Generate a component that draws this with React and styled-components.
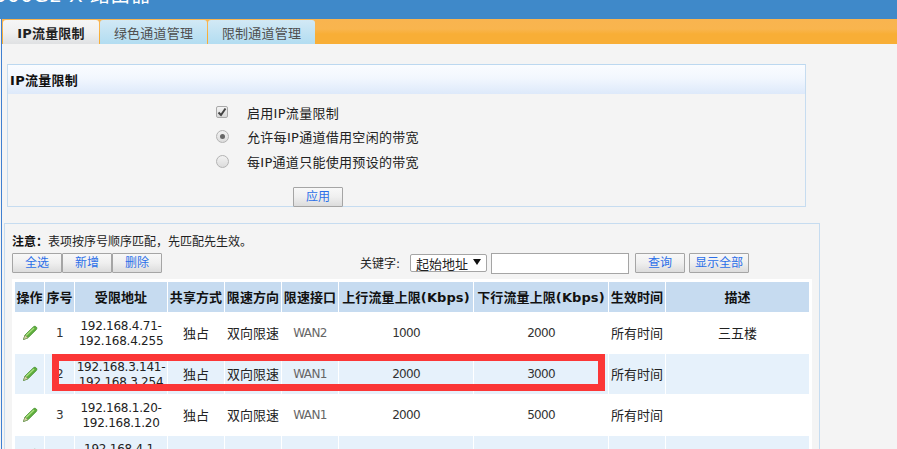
import React from "react";
import styled, { createGlobalStyle } from "styled-components";

const Global = createGlobalStyle`
  html, body { margin: 0; padding: 0; background: #f4f4f4; }
  body { font-family: "DejaVu Sans", "Noto Sans CJK SC", sans-serif; font-size: 12px; color: #111; }
`;
const Page = styled.div`
  width: 897px; height: 449px; overflow: hidden; position: relative;
  display: flex; flex-direction: column; background: #f4f4f4;
`;
const Header = styled.header`
  height: 19px; flex: none; background: #3f89c9; overflow: hidden; color: #fff;
  font-size: 20px; line-height: 24px; white-space: nowrap;
`;
const HeaderTitle = styled.div`
  margin: -17px 0 0 -6px; letter-spacing: 0.4px;
`;
const Main = styled.div`
  flex: 1; min-height: 0; border-left: 1px solid #3f7fd0; margin-left: 1px;
  display: flex; flex-direction: column;
`;
const TabBar = styled.nav`
  flex: none; height: 25px; display: flex; align-items: flex-end; gap: 1px; padding-left: 1px;
  background: linear-gradient(180deg, #f9b44f 0%, #f9b54e 40%, #f8ae36 60%, #f8ae36 100%);
`;
const Tab = styled.div`
  height: 24px; width: ${p => p.$w}px; display: flex; align-items: center; justify-content: center;
  font-size: 13px; border-radius: 3px 3px 0 0; letter-spacing: 0.2px;
  color: ${p => (p.$active ? "#222" : "#4f4f4f")};
  font-weight: ${p => (p.$active ? 700 : 400)};
  background: ${p => p.$active
    ? "linear-gradient(180deg, #f6f6f6 0%, #f0f0f0 50%, #dfe1e3 100%)"
    : "linear-gradient(180deg, #d2e9f5 0%, #b2ddf1 100%)"};
`;
const Panel = styled.section`
  margin: 20px 0 0 5px; width: 799px; height: 143px; flex: none; box-sizing: border-box;
  border: 1px solid #c6dcf0; border-top-color: #bcd8f0;
`;
const PanelTitle = styled.h2`
  margin: 0; height: 29px; padding: 0 0 0 2px; box-sizing: border-box; display: flex; align-items: center;
  font-size: 13px; font-weight: 700; color: #111; letter-spacing: 0.3px;
  background: linear-gradient(180deg, #fafcff 0%, #f2f7fe 45%, #dde9fa 100%);
`;
const FormRows = styled.div`
  padding: 6px 0 0 208px; display: flex; flex-direction: column;
`;
const FormRow = styled.label`
  height: 24.5px; display: flex; align-items: center; gap: 19px; font-size: 13px;
  color: #222; letter-spacing: 0.3px;
`;
const CheckBox = styled.span`
  width: 12px; height: 12px; flex: none; box-sizing: border-box; border: 1px solid #a9a9a9; border-radius: 2px;
  background: linear-gradient(180deg, #f4f4f4, #d8d8d8); display: flex; align-items: center; justify-content: center;
`;
const Radio = styled.span`
  width: 13px; height: 13px; flex: none; box-sizing: border-box; border: 1px solid #b3b3b3; border-radius: 50%;
  margin-right: -1px; background: linear-gradient(180deg, #f2f2f2, #dcdcdc);
  display: flex; align-items: center; justify-content: center;
  &::after { content: ""; width: 5px; height: 5px; border-radius: 50%; background: ${p => (p.$on ? "#666" : "transparent")}; }
`;
const ApplyRow = styled.div`
  padding: 13px 0 0 285px;
`;
const Button = styled.button`
  width: ${p => p.$w || 50}px; height: 20px; box-sizing: border-box; padding: 0; flex: none;
  margin-left: ${p => p.$gap || 0}px;
  border: 1px solid #a5a5a5; border-radius: 1px; color: #2b6fe8;
  font-family: inherit; font-size: 12px; line-height: 18px;
  background: linear-gradient(180deg, #f8f8f8 0%, #efefef 50%, #dcdcdc 100%);
`;
const ListPanel = styled.section`
  margin: 16px 0 0 2px; width: 816px; flex: none; box-sizing: border-box;
  border: 1px solid #c6dcf0; padding: 0 0 0 7px; height: 260px;
`;
const Note = styled.p`
  margin: 0; height: 29px; padding-top: 10px; box-sizing: border-box; font-size: 12px; line-height: 17px; color: #222;
  b { font-weight: 700; color: #111; }
`;
const Toolbar = styled.div`
  height: 20px; display: flex; align-items: flex-start; width: 737px;
`;
const ButtonGroup = styled.div`
  display: flex;
`;
const Search = styled.div`
  margin-left: auto; display: flex; align-items: flex-start; gap: 0;
`;
const SearchLabel = styled.span`
  width: 50px; font-size: 12px; line-height: 23px; color: #222;
`;
const Select = styled.div`
  width: 77px; height: 18px; margin-top: 1px; box-sizing: border-box; border: 1px solid #a5a5a5; border-radius: 2px;
  background: #fff; display: flex; align-items: center; justify-content: space-between;
  padding: 0 5px; font-size: 13px; color: #222;
  &::after { content: ""; border: 4px solid transparent; border-top: 6px solid #111; border-bottom: 0; margin-bottom: 3px; }
`;
const Field = styled.input`
  width: 138px; height: 21px; margin: 0 6px 0 4px; padding: 0; box-sizing: border-box; border: 1px solid #a5a5a5; background: #fff;
`;
const TableWrap = styled.div`
  position: relative; width: 800px; margin-top: 6px; background: #fff; padding: 3px 3px 0;
  box-sizing: border-box; height: 200px; overflow: hidden;
`;
const Table = styled.table`
  table-layout: fixed; width: 795px; border-collapse: separate; border-spacing: 1px 1px; margin: -1px 0 0 -1px;
`;
const Th = styled.th`
  height: 30px; padding: 0 0 1px; box-sizing: border-box; background: #c6dbf0; font-size: 13px; font-weight: 700; color: #111;
  text-align: center; white-space: nowrap; overflow: visible; letter-spacing: 0.1px;
`;
const Tr = styled.tr`
  background: ${p => (p.$alt ? "#e6f1fb" : "#fff")};
`;
const Td = styled.td`
  height: 40px; padding: 0; text-align: center; font-size: 13px; color: #222; white-space: nowrap;
  line-height: 15px;
`;
const Addr = styled.span`
  font-size: 12px; color: #222; line-height: 15.5px; letter-spacing: -0.25px; display: block;
  position: relative; top: 1px;
`;
const Port = styled.span`
  font-size: 12px; color: #666; font-family: "DejaVu Sans", sans-serif; letter-spacing: -0.6px;
`;
const Num = styled.span`
  font-size: 12px; color: #333; letter-spacing: -0.7px;
`;
const Highlight = styled.div`
  position: absolute; left: 40px; top: 75px; width: 553px; height: 37px; box-sizing: border-box;
  border: 7px solid #fb3636; pointer-events: none;
`;
const PencilIcon = styled.svg`
  display: block; margin: 0 auto;
`;

const Pencil = () => (
  <PencilIcon width="16" height="16" viewBox="0 0 16 16">
    <path d="M1.5 14.5 L3 10 L11.5 1.8 C12.5 1 13.5 1.2 14.3 2 C15 2.8 15 3.6 14.3 4.5 L6 12.8 Z" fill="#5fae3c" stroke="#3d8a2a" strokeWidth="0.8" />
    <path d="M4 10.5 L12 3" stroke="#a9e07f" strokeWidth="1.4" fill="none" />
    <path d="M1.5 14.5 L3 10 L6 12.8 Z" fill="#d9d2a8" stroke="#6f8a50" strokeWidth="0.5" />
  </PencilIcon>
);

const widths = [29, 29, 92, 56, 56, 56, 134, 134, 56, 143];
const heads = ["操作", "序号", "受限地址", "共享方式", "限速方向", "限速接口", "上行流量上限(Kbps)", "下行流量上限(Kbps)", "生效时间", "描述"];
const rows = [
  { n: 1, a: "192.168.4.71-", b: "192.168.4.255", port: "WAN2", up: 1000, down: 2000, note: "三五楼" },
  { n: 2, a: "192.168.3.141-", b: "192.168.3.254", port: "WAN1", up: 2000, down: 3000, note: "" },
  { n: 3, a: "192.168.1.20-", b: "192.168.1.20", port: "WAN1", up: 2000, down: 5000, note: "" },
  { n: 4, a: "192.168.4.1-", b: "192.168.4.70", port: "WAN1", up: 2000, down: 5000, note: "" },
];

export default function App() {
  return (
    <Page>
      <Global />
      <Header><HeaderTitle>500G2-X 路由器</HeaderTitle></Header>
      <Main>
        <TabBar>
          <Tab $w={96} $active>IP流量限制</Tab>
          <Tab $w={107}>绿色通道管理</Tab>
          <Tab $w={107}>限制通道管理</Tab>
        </TabBar>
        <Panel>
          <PanelTitle>IP流量限制</PanelTitle>
          <FormRows>
            <FormRow>
              <CheckBox>
                <svg width="10" height="10" viewBox="0 0 10 10"><path d="M1.5 5.5 L4 8 L8.5 1.5" fill="none" stroke="#444" strokeWidth="2" /></svg>
              </CheckBox>
              启用IP流量限制
            </FormRow>
            <FormRow><Radio $on />允许每IP通道借用空闲的带宽</FormRow>
            <FormRow><Radio />每IP通道只能使用预设的带宽</FormRow>
          </FormRows>
          <ApplyRow><Button>应用</Button></ApplyRow>
        </Panel>
        <ListPanel>
          <Note><b>注意：</b>表项按序号顺序匹配，先匹配先生效。</Note>
          <Toolbar>
            <ButtonGroup>
              <Button>全选</Button>
              <Button>新增</Button>
              <Button>删除</Button>
            </ButtonGroup>
            <Search>
              <SearchLabel>关键字:</SearchLabel>
              <Select>起始地址</Select>
              <Field />
              <Button>查询</Button>
              <Button $w={60} $gap={4}>显示全部</Button>
            </Search>
          </Toolbar>
          <TableWrap>
            <Table>
              <colgroup>{widths.map((w, i) => <col key={i} width={w} />)}</colgroup>
              <thead><tr>{heads.map(h => <Th key={h}>{h}</Th>)}</tr></thead>
              <tbody>
                {rows.map((r, i) => (
                  <Tr key={r.n} $alt={i % 2 === 1}>
                    <Td><Pencil /></Td>
                    <Td><Num>{r.n}</Num></Td>
                    <Td><Addr>{r.a}</Addr><Addr>{r.b}</Addr></Td>
                    <Td>独占</Td>
                    <Td>双向限速</Td>
                    <Td><Port>{r.port}</Port></Td>
                    <Td><Num>{r.up}</Num></Td>
                    <Td><Num>{r.down}</Num></Td>
                    <Td>所有时间</Td>
                    <Td>{r.note}</Td>
                  </Tr>
                ))}
              </tbody>
            </Table>
            <Highlight />
          </TableWrap>
        </ListPanel>
      </Main>
    </Page>
  );
}
